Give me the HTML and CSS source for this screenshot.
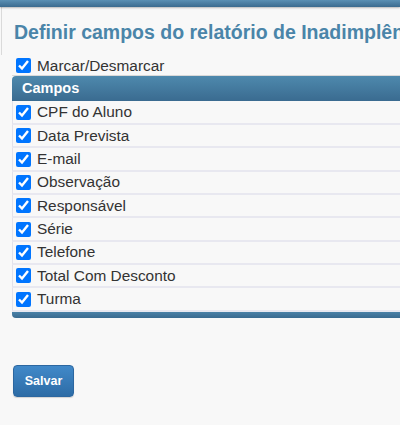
FILE: index.html
```html
<!DOCTYPE html>
<html lang="pt-BR">
<head>
<meta charset="utf-8">
<title>Definir campos</title>
<link rel="stylesheet" href="styles.css">
</head>
<body>
<div class="topbar"></div>
<div class="title-wrap">
  <h1 class="title">Definir campos do relatório de Inadimplência</h1>
</div>
<label class="toggle"><input type="checkbox" class="chk" checked><span>Marcar/Desmarcar</span></label>
<div class="table">
  <div class="head">Campos</div>
  <label class="row first"><input type="checkbox" class="chk" checked><span>CPF do Aluno</span></label>
  <label class="row"><input type="checkbox" class="chk" checked><span>Data Prevista</span></label>
  <label class="row"><input type="checkbox" class="chk" checked><span>E-mail</span></label>
  <label class="row"><input type="checkbox" class="chk" checked><span>Observação</span></label>
  <label class="row"><input type="checkbox" class="chk" checked><span>Responsável</span></label>
  <label class="row"><input type="checkbox" class="chk" checked><span>Série</span></label>
  <label class="row"><input type="checkbox" class="chk" checked><span>Telefone</span></label>
  <label class="row"><input type="checkbox" class="chk" checked><span>Total Com Desconto</span></label>
  <label class="row"><input type="checkbox" class="chk" checked><span>Turma</span></label>
  <div class="foot"></div>
</div>
<button class="btn" type="button">Salvar</button>
</body>
</html>
```
FILE: styles.css
```css
html, body {
  margin: 0;
  padding: 0;
}
body {
  width: 400px;
  height: 425px;
  overflow: hidden;
  background: #f8f8f8;
  font-family: "Liberation Sans", Arial, sans-serif;
  color: #333;
}
.topbar {
  height: 7px;
  background: linear-gradient(#5b90b4, #3b6b8f);
  box-shadow: 0 1px 2px rgba(0, 0, 0, 0.25);
  position: relative;
  z-index: 1;
}
.title-wrap {
  margin-left: 1px;
  border-left: 1px solid #dadada;
  height: 35px;
  padding-top: 13px;
  overflow: hidden;
}
.title {
  margin: 0 0 0 12px;
  font-size: 19.5px;
  line-height: 24px;
  font-weight: bold;
  color: #4a85a9;
  white-space: nowrap;
}
.toggle {
  display: flex;
  align-items: center;
  height: 19px;
  padding-top: 1px;
  padding-left: 16px;
  font-size: 15.4px;
}
.chk {
  width: 15px;
  height: 15px;
  margin: 0 6px 0 0;
  flex: none;
}
.table {
  margin-left: 12px;
  width: 520px;
  border-top: 1px solid #d9d9d9;
}
.head {
  height: 25px;
  line-height: 25px;
  padding-left: 10px;
  background: linear-gradient(#4e89ad, #3a6b90);
  border-top-left-radius: 4px;
  color: #fff;
  font-weight: bold;
  font-size: 14.5px;
}
.row {
  display: flex;
  align-items: center;
  box-sizing: border-box;
  height: 23.35px;
  padding-left: 3px;
  border-left: 1px solid #e2e2ea;
  border-bottom: 2px solid #e8e8f0;
  font-size: 15.4px;
  color: #333;
}
.row.first {
  height: 24px;
}
.foot {
  height: 6px;
  background: linear-gradient(#4a81a7, #3a6b90);
  border-bottom-left-radius: 4px;
}
.btn {
  display: block;
  margin: 47px 0 0 13px;
  width: 61px;
  height: 32px;
  padding: 0;
  border: 1px solid #2c67a0;
  border-radius: 4px;
  background: linear-gradient(#4189c9, #2d6ca6);
  color: #fff;
  font-family: "Liberation Sans", Arial, sans-serif;
  font-size: 12.5px;
  font-weight: bold;
  box-shadow: 0 1px 1px rgba(0, 0, 0, 0.15);
}
```
